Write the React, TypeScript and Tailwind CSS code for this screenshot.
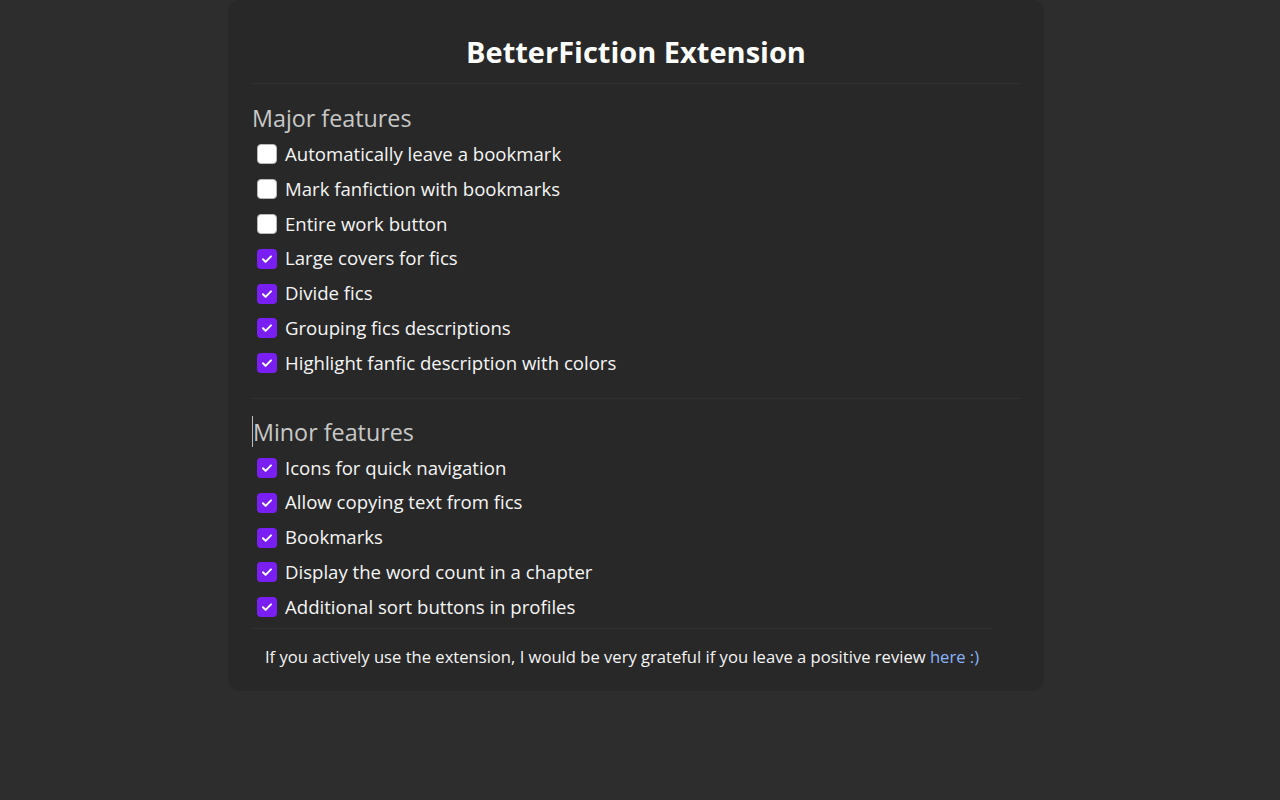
import React, { useState } from 'react';

type Feature = { id: string; label: string; on: boolean };

const major: Feature[] = [
  { id: 'autoBookmark', label: 'Automatically leave a bookmark', on: false },
  { id: 'markFics', label: 'Mark fanfiction with bookmarks', on: false },
  { id: 'entireWork', label: 'Entire work button', on: false },
  { id: 'largeCovers', label: 'Large covers for fics', on: true },
  { id: 'divideFics', label: 'Divide fics', on: true },
  { id: 'grouping', label: 'Grouping fics descriptions', on: true },
  { id: 'highlight', label: 'Highlight fanfic description with colors', on: true },
];

const minor: Feature[] = [
  { id: 'icons', label: 'Icons for quick navigation', on: true },
  { id: 'copy', label: 'Allow copying text from fics', on: true },
  { id: 'bookmarks', label: 'Bookmarks', on: true },
  { id: 'wordCount', label: 'Display the word count in a chapter', on: true },
  { id: 'sortButtons', label: 'Additional sort buttons in profiles', on: true },
];

const Row: React.FC<{ f: Feature; checked: boolean; onToggle: () => void }> = ({ f, checked, onToggle }) => (
  <label className="flex items-center h-[34.8px] cursor-pointer select-none">
    <span
      onClick={onToggle}
      className={`ml-[5px] mt-[2px] w-5 h-5 rounded-[4px] flex items-center justify-center shrink-0 ${
        checked ? 'bg-[#7a1ff4]' : 'bg-white border border-[#b8b8b8]'
      }`}
    >
      {checked && (
        <svg width="20" height="20" viewBox="0 0 20 20" fill="none">
          <path d="M6 10.3l2.6 2.6L14 7.4" stroke="white" strokeWidth="2" strokeLinecap="round" strokeLinejoin="round" />
        </svg>
      )}
    </span>
    <span className="ml-2 mt-[1px] text-[18.6px] text-[#f5f5f5]">{f.label}</span>
  </label>
);

const App: React.FC = () => {
  const [state, setState] = useState<Record<string, boolean>>(() => {
    const s: Record<string, boolean> = {};
    [...major, ...minor].forEach(f => (s[f.id] = f.on));
    return s;
  });

  const toggle = (id: string) => setState(prev => ({ ...prev, [id]: !prev[id] }));

  return (
    <div
      className="min-h-screen bg-[#2d2d2d] pr-2"
      style={{ fontFamily: '"Open Sans", "Noto Sans", sans-serif' }}
    >
      <div className="mx-auto w-[816px] bg-[#282828] rounded-xl px-6 pb-[22px]">
        <h1 className="pt-[32px] pb-[11px] text-center text-[29px] leading-[40px] font-bold text-white border-b border-[#303030]">
          BetterFiction Extension
        </h1>

        {/* MAJOR */}
        <div className="pt-[18px] pb-[18px] border-b border-[#303030]">
          <h2 className="text-[23.3px] leading-[32px] text-[#c8c8c8] mb-[2px]">Major features</h2>
          {major.map(f => (
            <Row key={f.id} f={f} checked={state[f.id]} onToggle={() => toggle(f.id)} />
          ))}
        </div>

        {/* MINOR */}
        <div className="pt-[17px]">
          <h2 className="flex items-center text-[23.3px] leading-[32px] text-[#c8c8c8] mb-[2px]">
            <span className="w-px h-[31px] bg-[#bdbdbd]" />
            Minor features
          </h2>
          {minor.map(f => (
            <Row key={f.id} f={f} checked={state[f.id]} onToggle={() => toggle(f.id)} />
          ))}
        </div>

        <div className="w-[740px] mt-[4px] border-t border-[#303030] pt-[16px] text-center text-[16.6px] leading-[24px] text-[#f5f5f5]">
          If you actively use the extension, I would be very grateful if you leave a positive review{' '}
          <a href="#" className="text-[#8ab4f8]">here :)</a>
        </div>
      </div>
    </div>
  );
};

export default App;
